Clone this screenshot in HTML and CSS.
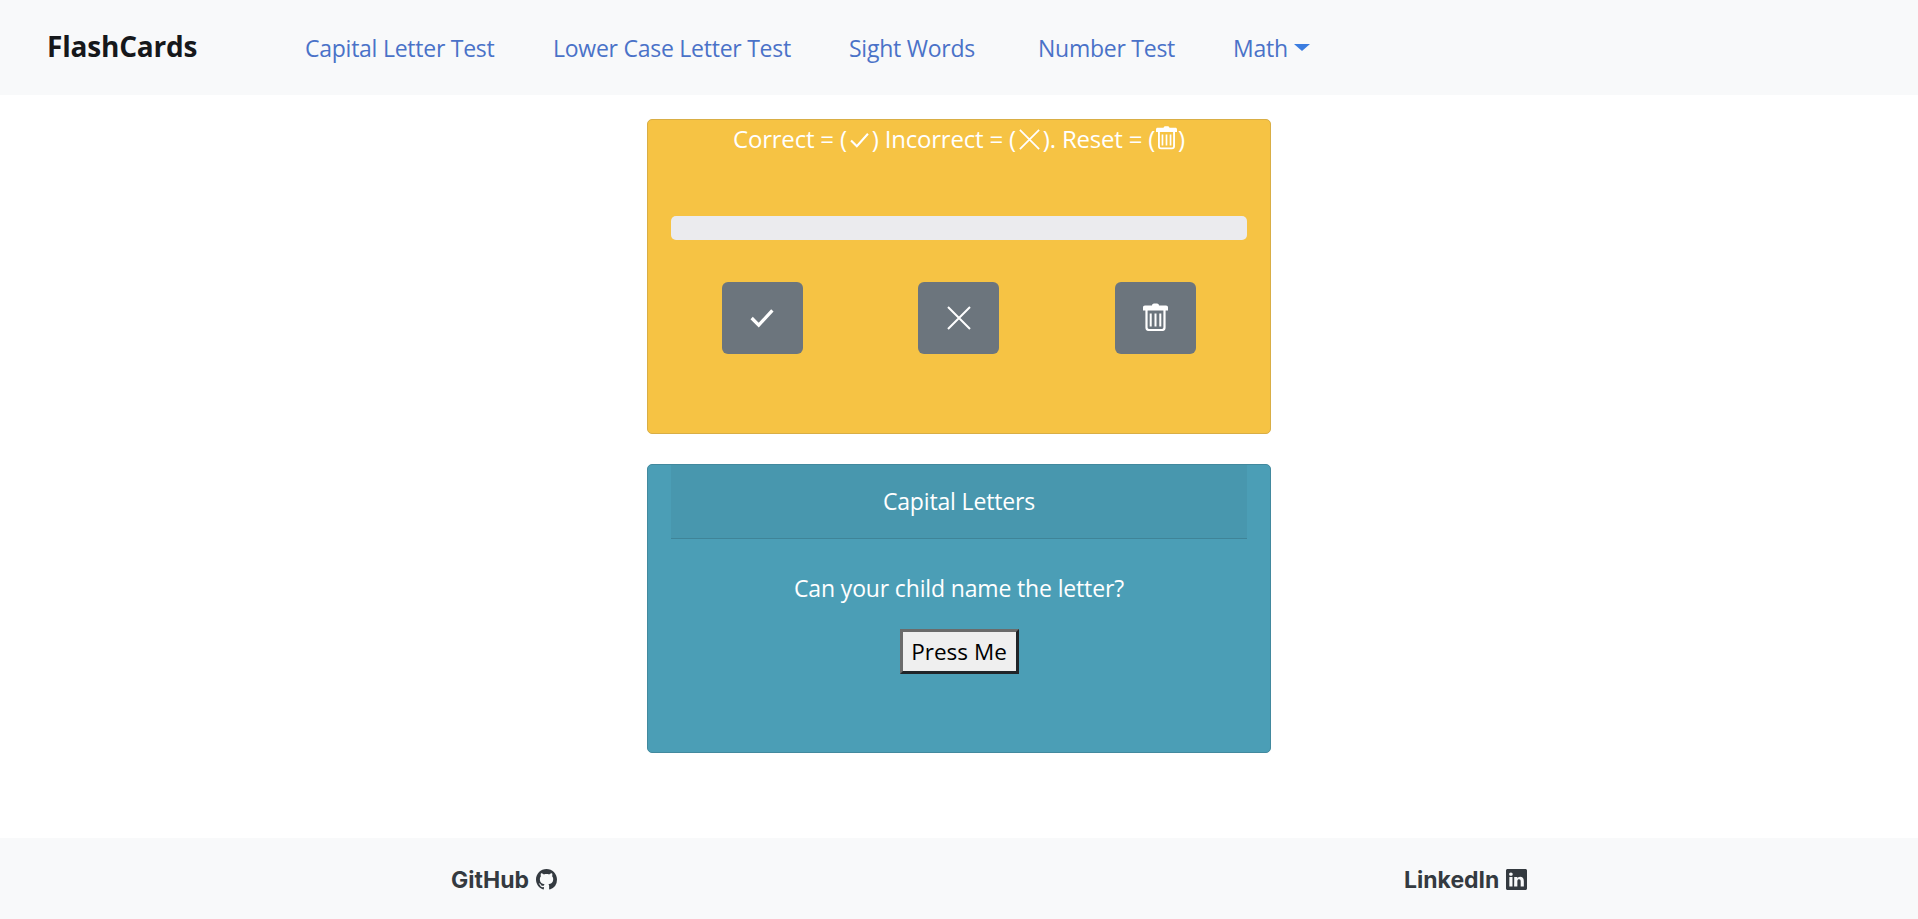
FILE: index.html
```html
<!DOCTYPE html>
<html lang="en">
<head>
    <meta charset="UTF-8">
    <meta name="viewport" content="width=device-width, initial-scale=1.0">
    <title>FlashCards</title>
    <link rel="stylesheet" href="styles.css">
</head>
<body>
    <svg class="icon-defs" aria-hidden="true">
        <symbol id="icon-check" viewBox="0 0 22 18">
            <path d="M1.500 9.500 8 16 20.500 2" fill="none" stroke="currentColor" stroke-width="2.400"/>
        </symbol>
        <symbol id="icon-check-bold" viewBox="0 0 22 18">
            <path d="M1.500 9 8 15.500 20.500 2" fill="none" stroke="currentColor" stroke-width="3"/>
        </symbol>
        <symbol id="icon-x" viewBox="0 0 24 24">
            <path d="M1 1 23 23M23 1 1 23" fill="none" stroke="currentColor" stroke-width="2"/>
        </symbol>
        <symbol id="icon-trash" viewBox="0 0 25 28">
            <path d="M9 2.500C9 1 10 .5 12.500 .5S16 1 16 2.500H23C24.300 2.500 25 3.200 25 4.500V7.500H0V4.500C0 3.200 .7 2.500 2 2.500Z" fill="currentColor"/>
            <path d="M3.500 7V24.500C3.500 26 4.500 27 6 27H19C20.500 27 21.500 26 21.500 24.500V7" fill="none" stroke="currentColor" stroke-width="2.200"/>
            <path d="M7.700 10.500V23.500M12.500 10.500V23.500M17.300 10.500V23.500" fill="none" stroke="currentColor" stroke-width="2"/>
        </symbol>
    </svg>

    <nav class="navbar">
        <a class="brand" href="#">FlashCards</a>
        <ul class="nav-links">
            <li><a href="#">Capital Letter Test</a></li>
            <li><a href="#">Lower Case Letter Test</a></li>
            <li><a href="#">Sight Words</a></li>
            <li><a href="#">Number Test</a></li>
            <li><a href="#">Math<span class="caret"></span></a></li>
        </ul>
    </nav>

    <main class="content">
        <section class="card card-score">
            <p class="legend">
                Correct = (<svg class="legend-icon legend-check"><use href="#icon-check"/></svg>)
                Incorrect = (<svg class="legend-icon legend-x"><use href="#icon-x"/></svg>).
                Reset = (<svg class="legend-icon legend-trash"><use href="#icon-trash"/></svg>)
            </p>
            <div class="progress"></div>
            <div class="score-buttons">
                <button class="btn" type="button"><svg class="btn-check"><use href="#icon-check-bold"/></svg></button>
                <button class="btn" type="button"><svg class="btn-x"><use href="#icon-x"/></svg></button>
                <button class="btn" type="button"><svg class="btn-trash"><use href="#icon-trash"/></svg></button>
            </div>
        </section>

        <section class="card card-test">
            <div class="card-header">Capital Letters</div>
            <p class="question">Can your child name the letter?</p>
            <button class="press-btn" type="button">Press Me</button>
        </section>
    </main>

    <footer class="footer">
        <a href="#">GitHub
            <svg class="footer-icon" viewBox="0 0 16 16"><path fill="currentColor" d="M8 0C3.58 0 0 3.58 0 8c0 3.54 2.290 6.530 5.470 7.590.4.07.55-.17.55-.38 0-.19-.01-.82-.01-1.490-2.010.37-2.530-.49-2.690-.94-.09-.23-.48-.94-.82-1.130-.28-.15-.68-.52-.01-.53.63-.01 1.080.58 1.230.82.72 1.210 1.870.87 2.330.66.07-.52.28-.87.51-1.070-1.780-.2-3.640-.89-3.640-3.950 0-.87.31-1.590.82-2.150-.08-.2-.36-1.020.08-2.120 0 0 .67-.21 2.200.82.64-.18 1.320-.27 2-.27.68 0 1.360.09 2 .27 1.530-1.040 2.200-.82 2.200-.82.44 1.100.16 1.920.08 2.120.51.56.82 1.270.82 2.150 0 3.070-1.870 3.750-3.650 3.950.29.25.54.73.54 1.480 0 1.070-.01 1.930-.01 2.200 0 .21.15.46.55.38A8.013 8.013 0 0016 8c0-4.420-3.580-8-8-8z"/></svg>
        </a>
        <a href="#">LinkedIn
            <svg class="footer-icon" viewBox="0 0 16 16"><path fill="currentColor" d="M0 1.146C0 .513.526 0 1.175 0h13.650C15.474 0 16 .513 16 1.146v13.708c0 .633-.526 1.146-1.175 1.146H1.175C.526 16 0 15.487 0 14.854V1.146zm4.943 12.248V6.169H2.542v7.225h2.401zm-1.200-8.212c.837 0 1.358-.554 1.358-1.248-.015-.709-.52-1.248-1.342-1.248-.822 0-1.359.54-1.359 1.248 0 .694.521 1.248 1.327 1.248h.016zm4.908 8.212V9.359c0-.216.016-.432.08-.586.173-.431.568-.878 1.232-.878.869 0 1.216.662 1.216 1.634v3.865h2.401V9.250c0-2.220-1.184-3.252-2.764-3.252-1.274 0-1.845.7-2.165 1.193v.025h-.016a5.540 5.540 0 0 1 .016-.025V6.169h-2.400c.03.678 0 7.225 0 7.225h2.400z"/></svg>
        </a>
    </footer>
</body>
</html>
```

FILE: styles.css
```css
* {
    box-sizing: border-box;
}
body {
    margin: 0;
    min-height: 919px;
    display: flex;
    flex-direction: column;
    font-family: "Open Sans", "Noto Sans", sans-serif;
    font-size: 23px;
    line-height: 36px;
    background: #fff;
}
a {
    text-decoration: none;
}
.icon-defs {
    display: none;
}
.navbar {
    height: 95px;
    display: flex;
    align-items: center;
    padding-left: 47px;
    background: #f8f9fa;
}
.brand {
    width: 258px;
    padding-bottom: 3px;
    font-size: 28px;
    font-weight: 700;
    letter-spacing: -0.2px;
    color: #16181b;
}
.nav-links {
    display: grid;
    grid-template-columns: 248px 296px 189px 195px auto;
    margin: 0;
    padding: 0;
    list-style: none;
    letter-spacing: -0.25px;
}
.nav-links a {
    color: #4a72c8;
}
.caret {
    display: inline-block;
    margin-left: 6px;
    vertical-align: 6px;
    border-top: 7px solid #3b7de0;
    border-left: 8px solid transparent;
    border-right: 8px solid transparent;
}
.content {
    display: flex;
    flex-direction: column;
    align-items: center;
    gap: 30px;
    padding-top: 24px;
}
.card {
    width: 624px;
    padding: 0 23px;
    border-radius: 5px;
    color: #fff;
    text-align: center;
}
.card-score {
    height: 315px;
    padding-top: 1px;
    background: #f6c344;
    border: 1px solid #d9ae45;
}
.legend {
    margin: 0;
    font-size: 24px;
    letter-spacing: -0.2px;
}
.legend-icon {
    margin: 0 2px;
}
.legend-check {
    width: 21px;
    height: 16px;
    vertical-align: 0;
}
.legend-x {
    width: 23px;
    height: 21px;
    vertical-align: -2px;
}
.legend-trash {
    width: 21px;
    height: 25px;
    margin: 0 1px;
    vertical-align: -2px;
}
.progress {
    height: 24px;
    margin-top: 59px;
    background: #ebebee;
    border-radius: 5px;
}
.score-buttons {
    display: grid;
    grid-template-columns: repeat(3, 1fr);
    justify-items: center;
    margin: 42px -7px 0;
}
.btn {
    width: 81px;
    height: 72px;
    display: flex;
    align-items: center;
    justify-content: center;
    padding: 0;
    border: none;
    border-radius: 6px;
    color: #fff;
    background: #6c757d;
}
.btn-check {
    width: 24px;
    height: 20px;
}
.btn-x {
    width: 24px;
    height: 24px;
}
.btn-trash {
    width: 25px;
    height: 28px;
    margin-bottom: 2px;
}
.card-test {
    height: 289px;
    background: #4b9eb6;
    border: 1px solid #42899e;
    letter-spacing: -0.15px;
}
.card-header {
    height: 74px;
    line-height: 73px;
    background: rgba(0, 0, 0, 0.04);
    border-bottom: 1px solid rgba(0, 0, 0, 0.125);
}
.question {
    margin: 31px 0 23px;
}
.press-btn {
    width: 119px;
    height: 45px;
    padding: 0;
    font-family: inherit;
    font-size: 22.5px;
    color: #000;
    background: #efefef;
    border: 3px solid;
    border-color: #6b6b6b #212529 #212529 #6b6b6b;
}
.footer {
    height: 81px;
    margin-top: auto;
    display: grid;
    grid-template-columns: 953px auto;
    align-items: center;
    padding: 2px 0 0 451px;
    background: #f8f9fa;
    font-family: Inter, "Noto Sans", sans-serif;
    font-size: 23px;
    font-weight: 700;
}
.footer a {
    display: flex;
    align-items: center;
    gap: 7px;
    color: #343a40;
}
.footer-icon {
    width: 21px;
    height: 21px;
}
```
